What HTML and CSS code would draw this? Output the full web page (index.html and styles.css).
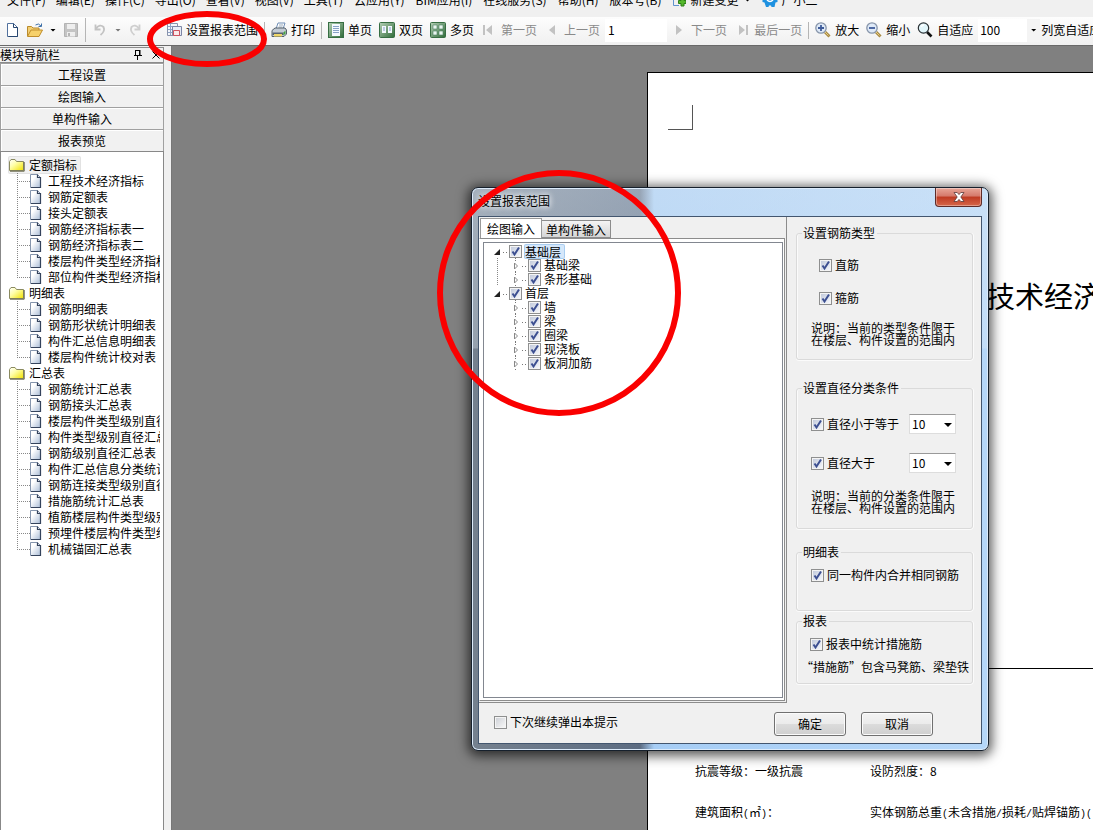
FILE: index.html
```html
<!DOCTYPE html>
<html lang="zh-CN">
<head>
<meta charset="utf-8">
<title>报表预览</title>
<link rel="stylesheet" href="styles.css">
</head>
<body>
<svg class="defs" aria-hidden="true">
  <defs>
    <linearGradient id="gfold" x1="0" y1="0" x2="1" y2="1"><stop offset="0" stop-color="#fff"/><stop offset=".4" stop-color="#ffffa8"/><stop offset="1" stop-color="#f0e000"/></linearGradient>
    <linearGradient id="gdoc" x1="0" y1="0" x2="1" y2="1"><stop offset=".3" stop-color="#fff"/><stop offset="1" stop-color="#a9bcd6"/></linearGradient>
    <linearGradient id="ggreen" x1="0" y1="0" x2="1" y2="1"><stop offset="0" stop-color="#b5d0b6"/><stop offset="1" stop-color="#2f6b38"/></linearGradient>
    <symbol id="folder" viewBox="0 0 16 14"><path d="M.5 3.500 2 1.500h4l1.500 2h7v9H.5z" fill="url(#gfold)" stroke="#8a8a60"/><path d="M15.200 4v9.200H1" fill="none" stroke="#66664a"/></symbol>
    <symbol id="doc" viewBox="0 0 12 14"><path d="M.5.5h7l3 3v10H.5z" fill="url(#gdoc)" stroke="#8595ad"/><path d="M7.500.5v3h3v10H1" fill="none" stroke="#34435c" stroke-width="1.200"/></symbol>
    <symbol id="lens" viewBox="0 0 16 16"><path d="m10 10 4.500 4.500" stroke="#a98b45" stroke-width="3"/><path d="m10 10 3.500 3.500" stroke="#e8cf83" stroke-width="1"/><circle cx="6" cy="6" r="5.200" fill="#dfeaf8" stroke="#8795aa" stroke-width="1.300"/></symbol>
  </defs>
</svg>

<nav class="menubar">
  <button>文件(F)</button><button>编辑(E)</button><button>操作(C)</button><button>导出(O)</button><button>查看(V)</button><button>视图(V)</button><button>工具(T)</button><button>云应用(Y)</button><button>BIM应用(I)</button><button>在线服务(S)</button><button>帮助(H)</button><button>版本号(B)</button>
  <button class="with-icon"><svg width="14" height="14" viewBox="0 0 14 14"><path d="M1.500 0v12.500H7M10 0v3" fill="none" stroke="#5f93cf"/><path d="M9 5h3v2.500h2v3h-2V13H9v-2.500H6.500v-3H9z" fill="#55b82c" stroke="#2d7f19"/></svg>新建变更<i class="caret"></i></button>
  <button class="with-icon"><svg width="16" height="16" viewBox="0 0 16 16"><path d="M3 1h10v5l2.500 1v3l-2 .5-1 4.500H9.500L9 13.500H7L6.500 15H4l-1.500-4.500-2-.5V7L3 6z" fill="#1e91e0"/><path d="M5 8q3 3 6 0" fill="none" stroke="#fff" stroke-width="1.400"/></svg>广小二</button>
</nav>

<div class="toolbar">
  <button class="tool" aria-label="新建"><svg class="ico" viewBox="0 0 16 16"><path d="M3.500 1.500h6l4 4v9h-10z" fill="#fff" stroke="#51719e"/><path d="M9.500 1.500v4h4v9h-9" fill="none" stroke="#27466f"/></svg></button>
  <button class="tool" aria-label="打开"><svg class="ico" viewBox="0 0 16 16"><path d="M.5 14V4.500h4L6 6h6v2" fill="#f3cf73" stroke="#b98a2b"/><path d="M.5 14.500 4 8h11.500L12 14.500z" fill="#f6d16b" stroke="#c08e2c"/><path d="M8.500 3q3-2.500 5.500 1M14.500 1.500v3h-3" fill="none" stroke="#3f71a8"/></svg></button>
  <i class="caret"></i>
  <button class="tool" aria-label="保存" disabled><svg class="ico" viewBox="0 0 16 16"><path d="M1.500 1.500h13v13h-13z" fill="#c4c4c4" stroke="#b3b3b3"/><path d="M4 2h8v5H4zM4 10h8v4.500H4z" fill="#eee"/><path d="M5 11h2v3H5z" fill="#b5b5b5"/></svg></button>
  <i class="sep sep-tall"></i>
  <button class="tool" aria-label="撤销" disabled><svg class="ico" viewBox="0 0 16 16"><path d="M4 6.500q4-5 7.500-1.500 2 4-3 8M3.500 2.500v5h5" fill="none" stroke="#c3c3c3" stroke-width="1.800"/></svg></button>
  <i class="caret dim"></i>
  <button class="tool" aria-label="重做" disabled><svg class="ico" viewBox="0 0 16 16"><path d="M11 6.500Q7 1.500 3.500 5q-2 4 3 8M11.500 2.500v5h-5" fill="none" stroke="#cfcfcf" stroke-width="1.800"/></svg></button>
  <button class="tool range"><svg class="ico" viewBox="0 0 16 16"><path d="M1.500 1.500h10v12h-10z" fill="#f3f6fb" stroke="#8792ab"/><path d="M2 4.500h9M2 7.500h9M2 10.500h9M4.500 2v11" stroke="#8fa3c6"/><path d="M6.500 4.500h9v9h-9z" fill="#e7ecf6" stroke="#7d86a5"/><path d="M7.500 8.500h6v5h-6z" fill="#fbe9ea" stroke="#cf5360"/></svg>设置报表范围</button>
  <i class="sep"></i>
  <button class="tool"><svg class="ico" viewBox="0 0 16 16"><path d="M5 7 7 1h7l-2 6z" fill="#fff" stroke="#6f8db5"/><path d="M8 3h4M7.500 5h4" stroke="#9ab"/><path d="M1 8.500 4 6h10l1.500 2v4L13 14.500H1z" fill="#c3cbd4" stroke="#55606b"/><path d="M1.500 10.500h11V13h-11z" fill="#59636e"/><path d="M3 12h8v2.500H3z" fill="#efd667"/><path d="m12.500 10.500 2-2v3l-2 2z" fill="#45a241"/></svg>打印</button>
  <i class="sep"></i>
  <button class="tool"><svg class="ico" viewBox="0 0 16 16"><rect x=".5" y=".5" width="15" height="15" fill="url(#ggreen)" stroke="#376e43"/><path d="M4 2h8v12H4z" fill="#f5f9ff"/><path d="M5 4.500h6M5 6.500h6M5 8.500h6M5 10.500h6" stroke="#87a2c7"/></svg>单页</button>
  <button class="tool"><svg class="ico" viewBox="0 0 16 16"><rect x=".5" y=".5" width="15" height="15" rx="1" fill="url(#ggreen)" stroke="#376e43"/><path d="M3 4h4v7H3zM9 4h4v7H9z" fill="#f5f9ff"/><path d="M4 6h2M4 8h2M10 6h2M10 8h2" stroke="#7f9bc4"/></svg>双页</button>
  <button class="tool"><svg class="ico" viewBox="0 0 16 16"><rect x=".5" y=".5" width="15" height="15" rx="1" fill="url(#ggreen)" stroke="#376e43"/><path d="M3 3h4v4H3zM9 3h4v4H9zM3 9h4v4H3zM9 9h4v4H9z" fill="#eaf5f0" stroke="#4b8062" stroke-width=".6"/></svg>多页</button>
  <button class="tool" disabled><svg class="ico" viewBox="0 0 16 16"><path d="M2 3h2v10H2zM11 3v10L5 8z" fill="#c2c2c2"/></svg>第一页</button>
  <button class="tool" disabled><svg class="ico" viewBox="0 0 16 16"><path d="M11 3v10L5 8z" fill="#c2c2c2"/></svg>上一页</button>
  <input class="page-no" type="text" value="1" aria-label="页码">
  <button class="tool" disabled><svg class="ico" viewBox="0 0 16 16"><path d="M5 3v10l6-5z" fill="#c2c2c2"/></svg>下一页</button>
  <button class="tool" disabled><svg class="ico" viewBox="0 0 16 16"><path d="M5 3v10l6-5zM12 3h2v10h-2z" fill="#c2c2c2"/></svg>最后一页</button>
  <i class="sep"></i>
  <button class="tool"><svg class="ico" viewBox="0 0 16 16"><use href="#lens"/><path d="M3 6h6M6 3v6" stroke="#3f5c9a" stroke-width="1.800"/></svg>放大</button>
  <button class="tool"><svg class="ico" viewBox="0 0 16 16"><use href="#lens"/><path d="M3 6h6" stroke="#3f5c9a" stroke-width="1.800"/></svg>缩小</button>
  <button class="tool"><svg class="ico" viewBox="0 0 16 16"><path d="m10 10 4.500 4.500" stroke="#111" stroke-width="2.600"/><circle cx="6.500" cy="6" r="5.200" fill="#e2f6fb" stroke="#2b3236" stroke-width="1.200"/><path d="M4 5q1-2 3-2" stroke="#fff" fill="none" stroke-width="1.500"/></svg>自适应</button>
  <div class="zoom-box"><input type="text" value="100" aria-label="缩放比例"><button aria-label="选择比例"><i class="caret"></i></button></div>
  <button class="tool fit">列宽自适应</button>
</div>

<div class="main">
  <aside class="side">
    <div class="side-title"><span>模块导航栏</span>
      <svg width="8" height="10" viewBox="0 0 8 10"><path d="M1.500 0v5.500M5.500 0v5.500M1 .5h5M0 5.500h8M3.500 6v4" fill="none" stroke="#000"/><path d="M5 0h1.500v6H5z"/></svg>
      <svg width="8" height="8" viewBox="0 0 8 8"><path d="m.5.500 7 7m0-7-7 7" stroke="#000"/></svg>
    </div>
    <button class="side-btn">工程设置</button>
    <button class="side-btn">绘图输入</button>
    <button class="side-btn">单构件输入</button>
    <button class="side-btn">报表预览</button>
    <div class="reports">
      <div class="folder selected"><svg width="16" height="14"><use href="#folder"/></svg><span>定额指标</span></div>
      <ul>
        <li><svg width="12" height="14"><use href="#doc"/></svg><span>工程技术经济指标</span></li>
        <li><svg width="12" height="14"><use href="#doc"/></svg><span>钢筋定额表</span></li>
        <li><svg width="12" height="14"><use href="#doc"/></svg><span>接头定额表</span></li>
        <li><svg width="12" height="14"><use href="#doc"/></svg><span>钢筋经济指标表一</span></li>
        <li><svg width="12" height="14"><use href="#doc"/></svg><span>钢筋经济指标表二</span></li>
        <li><svg width="12" height="14"><use href="#doc"/></svg><span>楼层构件类型经济指标</span></li>
        <li><svg width="12" height="14"><use href="#doc"/></svg><span>部位构件类型经济指标</span></li>
      </ul>
      <div class="folder"><svg width="16" height="14"><use href="#folder"/></svg><span>明细表</span></div>
      <ul>
        <li><svg width="12" height="14"><use href="#doc"/></svg><span>钢筋明细表</span></li>
        <li><svg width="12" height="14"><use href="#doc"/></svg><span>钢筋形状统计明细表</span></li>
        <li><svg width="12" height="14"><use href="#doc"/></svg><span>构件汇总信息明细表</span></li>
        <li><svg width="12" height="14"><use href="#doc"/></svg><span>楼层构件统计校对表</span></li>
      </ul>
      <div class="folder"><svg width="16" height="14"><use href="#folder"/></svg><span>汇总表</span></div>
      <ul>
        <li><svg width="12" height="14"><use href="#doc"/></svg><span>钢筋统计汇总表</span></li>
        <li><svg width="12" height="14"><use href="#doc"/></svg><span>钢筋接头汇总表</span></li>
        <li><svg width="12" height="14"><use href="#doc"/></svg><span>楼层构件类型级别直径</span></li>
        <li><svg width="12" height="14"><use href="#doc"/></svg><span>构件类型级别直径汇总</span></li>
        <li><svg width="12" height="14"><use href="#doc"/></svg><span>钢筋级别直径汇总表</span></li>
        <li><svg width="12" height="14"><use href="#doc"/></svg><span>构件汇总信息分类统计</span></li>
        <li><svg width="12" height="14"><use href="#doc"/></svg><span>钢筋连接类型级别直径</span></li>
        <li><svg width="12" height="14"><use href="#doc"/></svg><span>措施筋统计汇总表</span></li>
        <li><svg width="12" height="14"><use href="#doc"/></svg><span>植筋楼层构件类型级别</span></li>
        <li><svg width="12" height="14"><use href="#doc"/></svg><span>预埋件楼层构件类型级</span></li>
        <li><svg width="12" height="14"><use href="#doc"/></svg><span>机械锚固汇总表</span></li>
      </ul>
    </div>
  </aside>

  <main class="workspace">
    <article class="sheet">
      <div class="crop-mark"></div>
      <h1>技术经济</h1>
      <div class="facts">
        <span>抗震等级：一级抗震</span><span>设防烈度：8</span>
        <span>建筑面积<b>(</b>㎡<b>)</b>：</span><span>实体钢筋总重<b>(</b>未含措施<b>/</b>损耗<b>/</b>贴焊锚筋<b>)(</b></span>
      </div>
    </article>
  </main>
</div>

<section class="dialog" role="dialog" aria-label="设置报表范围">
  <header class="caption"><span>设置报表范围</span><button class="close" aria-label="关闭"><svg width="12" height="10" viewBox="0 0 12 10"><path d="M1 .5h3.200L6 2.600 7.800.5H11L7.800 5 11 9.500H7.800L6 7.400 4.200 9.500H1L4.200 5z" fill="#fff" stroke="#5b3a3a" stroke-width=".8"/></svg></button></header>
  <div class="client">
    <div class="columns">
      <div class="left">
        <div class="tabs"><button class="tab active">绘图输入</button><button class="tab">单构件输入</button></div>
        <div class="tab-page">
          <ul class="parts">
            <li class="top"><i class="open"></i><label><input type="checkbox" checked><span class="hit">基础层</span></label></li>
            <li class="sub first"><i class="shut"></i><label><input type="checkbox" checked>基础梁</label></li>
            <li class="sub first"><i class="shut"></i><label><input type="checkbox" checked>条形基础</label></li>
            <li class="top"><i class="open"></i><label><input type="checkbox" checked>首层</label></li>
            <li class="sub"><i class="shut"></i><label><input type="checkbox" checked>墙</label></li>
            <li class="sub"><i class="shut"></i><label><input type="checkbox" checked>梁</label></li>
            <li class="sub"><i class="shut"></i><label><input type="checkbox" checked>圈梁</label></li>
            <li class="sub"><i class="shut"></i><label><input type="checkbox" checked>现浇板</label></li>
            <li class="sub"><i class="shut"></i><label><input type="checkbox" checked>板洞加筋</label></li>
          </ul>
        </div>
      </div>
      <div class="right">
        <fieldset class="kinds"><legend>设置钢筋类型</legend>
          <div class="body">
            <label class="check"><input type="checkbox" checked>直筋</label>
            <label class="check"><input type="checkbox" checked>箍筋</label>
            <p>说明：当前的类型条件限于<br>在楼层、构件设置的范围内</p>
          </div>
        </fieldset>
        <fieldset class="sizes"><legend>设置直径分类条件</legend>
          <div class="body">
            <div class="row"><label class="check"><input type="checkbox" checked>直径小于等于</label><select aria-label="直径小于等于"><option>10</option></select></div>
            <div class="row"><label class="check"><input type="checkbox" checked>直径大于</label><select aria-label="直径大于"><option>10</option></select></div>
            <p>说明：当前的分类条件限于<br>在楼层、构件设置的范围内</p>
          </div>
        </fieldset>
        <fieldset class="detail"><legend>明细表</legend>
          <div class="body"><label class="check"><input type="checkbox" checked>同一构件内合并相同钢筋</label></div>
        </fieldset>
        <fieldset class="report"><legend>报表</legend>
          <div class="body">
            <label class="check"><input type="checkbox" checked>报表中统计措施筋</label>
            <p><q>措施筋</q>包含马凳筋、梁垫铁</p>
          </div>
        </fieldset>
      </div>
    </div>
    <footer class="actions"><label class="check"><input type="checkbox">下次继续弹出本提示</label><button class="push">确定</button><button class="push">取消</button></footer>
  </div>
</section>

<svg class="marks" aria-hidden="true"><ellipse cx="207" cy="39" rx="57" ry="25"/><ellipse cx="559" cy="293" rx="119" ry="120"/></svg>
</body>
</html>
```
FILE: styles.css
```css
* { box-sizing: border-box; }
body {
  margin: 0;
  height: 100vh;
  overflow: hidden;
  display: flex;
  flex-direction: column;
  background: #f0f0f0;
  color: #000;
  font: 12px/16px "Noto Sans CJK SC", sans-serif;
}
button, input, select { font: inherit; color: inherit; margin: 0; }
button { border: 0; padding: 0; background: none; white-space: nowrap; }
ul { list-style: none; margin: 0; padding: 0; }
p { margin: 0; }
svg { flex: none; display: block; }
.defs { position: absolute; width: 0; height: 0; }

.caret {
  width: 6px;
  height: 3px;
  flex: none;
  background: #000;
  clip-path: polygon(0 0, 100% 0, 50% 100%);
}
.caret.dim { background: #777; }

/* menu bar, scrolled partly past the top edge */
.menubar {
  flex: none;
  display: flex;
  gap: 10px;
  height: 26px;
  margin-top: -9px;
  padding: 1px 0 0 7px;
  align-items: flex-start;
}
.menubar button { line-height: 16px; }
.menubar button:nth-child(n+8) { padding-left: 1px; }
.with-icon { display: flex; align-items: center; gap: 4px; }
.with-icon .caret { margin-left: 2px; }

.toolbar {
  flex: none;
  display: flex;
  align-items: center;
  gap: 7px;
  height: 29px;
  padding: 0 0 2px 4px;
  overflow: hidden;
  background: linear-gradient(#fdfdfd, #f0f0f0);
  border-bottom: 1px solid #696969;
}
.tool { display: flex; align-items: center; gap: 4px; flex: none; }
.tool:disabled { color: #8a8a8a; }
.tool.range { margin-left: 15px; }
.tool.fit { margin-left: -6px; }
.ico { width: 16px; height: 16px; }
.sep { flex: none; width: 1px; height: 17px; margin: 0 -1px; background: #b5b5b5; }
.sep-tall { height: 24px; }
.page-no { flex: none; width: 62px; height: 23px; margin: 0 -3px 0 -2px; padding: 0 3px 1px; border: 0; background: #fff; }
.zoom-box { flex: none; display: flex; width: 62px; height: 23px; margin-left: -2px; }
.zoom-box input { width: 49px; border: 0; padding: 0 2px 1px; background: #fff; }
.zoom-box button { flex: 1; display: flex; align-items: center; justify-content: center; background: #f4f4f4; }

.main { flex: 1; min-height: 0; display: flex; }

/* navigation panel */
.side {
  flex: none;
  width: 172px;
  padding: 1px 7px 0 0;
  display: flex;
  flex-direction: column;
  border-right: 1px solid #777;
  background: #f0f0f0;
}
.side-title { display: flex; align-items: center; gap: 10px; height: 16px; line-height: 14px; border: 1px solid #8c8c8c; border-left: 0; padding-right: 3px; }
.side-title span { flex: 1; }
.side-btn { height: 22px; flex: none; border: 1px solid #a0a0a0; border-bottom: 0; background: #f1f1f1; box-shadow: inset 1px 1px #fff; line-height: 20px; }
.reports {
  flex: 1;
  min-height: 0;
  overflow: hidden;
  background: #fff;
  border: 1px solid #888;
  border-bottom: 0;
  padding: 5px 3px 0 8px;
}
.folder { display: flex; align-items: center; gap: 1px; height: 16px; width: max-content; }
.folder span { padding: 0 3px; }
.folder.selected { background: #f1f1f1; box-shadow: 0 0 0 1px #e2e2e2; border-radius: 1px; }
.reports ul { margin-left: 8px; background: linear-gradient(#888 50%, transparent 50%) 0 0 / 1px 2px repeat-y; }
.reports li { display: flex; align-items: center; height: 16px; overflow: hidden; white-space: nowrap; }
.reports li::before { content: ""; width: 13px; height: 1px; flex: none; background: repeating-linear-gradient(90deg, #888 0 1px, transparent 1px 2px); }
.reports li:last-child { background: linear-gradient(#fff, #fff) 0 9px / 1px 7px no-repeat; }
.reports li span { padding-left: 6px; }

/* report sheet */
.workspace { flex: 1; min-width: 0; overflow: hidden; background: #808080; padding: 26px 0 0 475px; }
.sheet { height: 100%; background: #fff; border: solid #000; border-width: 1px 0 0 1px; padding: 32px 0 0 20px; overflow: hidden; }
.crop-mark { width: 25px; height: 25px; border: solid #555; border-width: 0 1px 1px 0; }
.sheet h1 { margin: 145px 0 0 318px; font-size: 29px; line-height: 40px; font-weight: 400; white-space: nowrap; }
.facts { display: grid; grid-template-columns: 175px 1fr; grid-auto-rows: 16px; row-gap: 25px; margin-top: 353px; padding: 94px 0 0 27px; border-top: 1px solid #000; white-space: nowrap; }
.facts b { font: 10px/12px "Liberation Mono", monospace; }

/* dialog window */
.dialog {
  position: absolute;
  left: 471px;
  top: 187px;
  width: 518px;
  padding: 0 6px 6px;
  border: 1px solid #16202c;
  border-radius: 7px;
  background:
    linear-gradient(rgba(225, 235, 245, .45), rgba(225, 235, 245, .3) 160px, transparent 161px),
    linear-gradient(90deg, #75818f 0, #5c6c82 168px, #a6cdf5 182px, #b5d7f9 100%);
  box-shadow: inset 0 0 0 1px #dcebfb, 0 2px 12px 3px rgba(0, 0, 0, .65);
}
.caption { display: flex; justify-content: space-between; height: 28px; }
.caption span { padding-top: 5px; text-shadow: 0 0 6px #fff, 0 0 6px #fff; }
.close { display: flex; align-items: center; justify-content: center; width: 47px; height: 19px; border: 1px solid #5e2b28; border-top: 0; border-radius: 0 0 4px 4px; background: linear-gradient(#e8a698, #d5796a 45%, #bf3a22 50%, #d5674a); box-shadow: inset 0 0 0 1px rgba(255, 255, 255, .35); }
.client { border: 1px solid #43566f; background: #f0f0f0; }
.columns { display: flex; align-items: stretch; }
.left { flex: none; width: 308px; padding: 1px 1px 1px 0; display: flex; flex-direction: column; border-right: 1px solid #8c8c8c; border-bottom: 1px solid #8c8c8c; }
.tabs { display: flex; align-items: flex-end; height: 20px; padding-left: 1px; }
.tab { width: 69px; height: 18px; border: 1px solid #8c8c8c; border-left: 0; background: linear-gradient(#f4f4f4, #d5d5d5); line-height: 18px; }
.tab.active { width: 62px; height: 20px; border: 1px solid #999; border-bottom: 0; background: #fff; line-height: 17px; }
.tab-page { flex: 1; border: 1px solid #8c8c8c; border-left-color: #fff; background: #fff; padding: 3px 1px 2px 3px; }
.parts { height: 100%; border: 1px solid #828790; padding: 1px 0 0 9px; background: #fff; }
.parts li { display: flex; align-items: center; height: 14px; line-height: 14px; }
.parts label { display: flex; align-items: center; gap: 3px; }
.parts li i { flex: none; width: 16px; height: 14px; background-repeat: no-repeat; }
.parts .open { background-image: url('data:image/svg+xml,<svg xmlns="http://www.w3.org/2000/svg" width="16" height="14"><path d="M7 5v6H1z" fill="%23222"/><path d="M10 8.500h1m2 0h1" stroke="%23777"/></svg>'); }
.parts .shut { background-image: url('data:image/svg+xml,<svg xmlns="http://www.w3.org/2000/svg" width="16" height="14"><path d="M2.500 5v6L5.500 8z" fill="%23fff" stroke="%23888"/><path d="M10 8.500h1m2 0h1M3.500 0v1m0 1v1m0 10v1" stroke="%23777"/></svg>'); }
.parts .sub { padding-left: 19px; }
.parts .first { background: repeating-linear-gradient(#888 0 1px, transparent 1px 2px) 4px 0 / 1px 14px no-repeat; }
.hit { background: #d5e7fa; box-shadow: 0 0 0 1px #a9cdf0; border-radius: 1px; padding-right: 3px; height: 13px; line-height: 13px; }

input[type="checkbox"] { appearance: none; flex: none; width: 13px; height: 13px; border: 1px solid #8e8f8f; background: linear-gradient(135deg, #cfd2d8, #f6f6f6) content-box, #f4f4f4; padding: 1px; }
input[type="checkbox"]:checked { background: url('data:image/svg+xml,<svg xmlns="http://www.w3.org/2000/svg" width="11" height="11"><path d="m2.500 5.500 2 3L9 1.500" fill="none" stroke="%233c4f91" stroke-width="2"/></svg>') center no-repeat border-box, linear-gradient(135deg, #c3cbdc, #f4f6fb) content-box, #f4f4f4; }

.right { flex: 1; padding: 10px 8px 19px 9px; }
fieldset { min-width: 0; margin: 0; border: 1px solid #dadada; border-radius: 3px; box-shadow: 0 1px #fbfbfb, 1px 0 #fbfbfb, inset 1px 0 #fbfbfb; padding: 0; line-height: 12px; }
legend { padding: 0 2px 0 1px; margin-left: 5px; line-height: 12px; }
.check { display: flex; align-items: center; gap: 3px; height: 14px; line-height: 14px; }
fieldset p { white-space: nowrap; }
.kinds .body { padding: 19px 0 13px 22px; }
.kinds .check + .check { margin-top: 19px; }
.kinds p { margin: 17px 0 0 -8px; }
.sizes { margin-top: 22px; }
.sizes .body { padding: 20px 16px 14px 14px; }
.row { display: flex; align-items: center; justify-content: space-between; height: 20px; }
.row + .row { margin-top: 19px; }
.sizes p { margin-top: 17px; }
select { appearance: none; width: 47px; height: 20px; border: 1px solid #ddd; border-top-color: #999; border-radius: 0; padding: 0 2px; line-height: 16px; background: #fff url('data:image/svg+xml,<svg xmlns="http://www.w3.org/2000/svg" width="8" height="4"><path d="M0 0h8L4 4z"/></svg>') 34px 8px no-repeat; }
.detail { margin-top: 17px; }
.detail .body { padding: 10px 0 28px 14px; }
.report { margin-top: 4px; }
.report .body { padding: 10px 0 10px 13px; }
.report p { margin: 10px 0 0 -9px; }
q { quotes: "“" "”"; }
.actions { display: flex; align-items: center; gap: 15px; padding: 9px 48px 7px 15px; }
.actions .check { flex: 1; margin-bottom: 4px; }
.push { width: 72px; height: 24px; border: 1px solid #707070; border-radius: 3px; background: linear-gradient(#f3f3f3, #ebebeb 50%, #dcdcdc 50%, #cfcfcf); box-shadow: inset 0 0 0 1px #fbfbfb; }

/* highlighter rings drawn over the window */
.marks { position: absolute; left: 0; top: 0; width: 100%; height: 100%; pointer-events: none; fill: none; stroke: #fa0000; stroke-width: 6; }
```
